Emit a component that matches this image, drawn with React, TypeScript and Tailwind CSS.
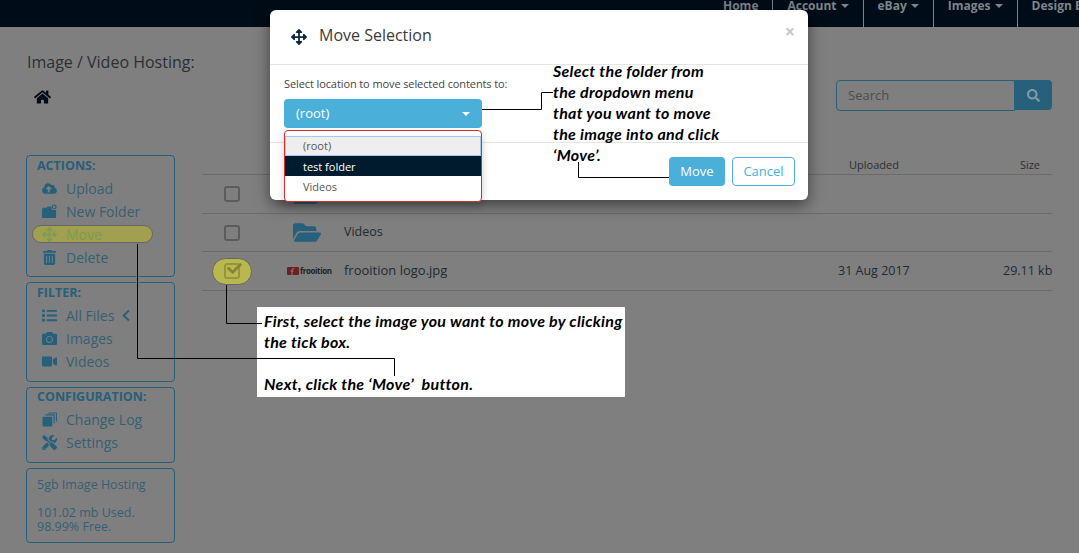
import {
  FaArrowsAlt,
  FaCamera,
  FaCheck,
  FaChevronLeft,
  FaCloudUploadAlt,
  FaFolderOpen,
  FaHome,
  FaList,
  FaSearch,
  FaTools,
  FaTrashAlt,
  FaVideo,
} from "react-icons/fa"

function NewFolderIcon({ className }: { className?: string }) {
  return (
    <svg viewBox="0 0 16 16" className={className} fill="currentColor">
      <path d="M0 5.5 L1 4 L5 4 L6 3 L10 2.5 L10 5 L11.5 6.5 L15 6.5 L15 15 L0 15 Z" />
      <circle cx="13" cy="3" r="2" fill="none" stroke="currentColor" strokeWidth="1.2" />
    </svg>
  )
}

function StackIcon({ className }: { className?: string }) {
  return (
    <svg viewBox="0 0 16 16" className={className} fill="currentColor">
      <path d="M6 0.5 H15 Q16 0.5 16 1.5 V10 H14.8 V1.7 H6 Z" />
      <path d="M3.5 2.5 H13.5 V12 H12.3 V3.7 H3.5 Z" />
      <rect x="0.5" y="5" width="10.5" height="10.5" rx="1" />
    </svg>
  )
}

const navItems = [
  { label: "Home" },
  { label: "Account", caret: true },
  { label: "eBay", caret: true },
  { label: "Images", caret: true },
  { label: "Design Extras" },
]

const sections = [
  {
    title: "ACTIONS:",
    box: "h-[122px] pt-[1px]",
    list: "mt-[3px]",
    items: [
      { icon: FaCloudUploadAlt, label: "Upload" },
      { icon: NewFolderIcon, label: "New Folder" },
      { icon: FaArrowsAlt, label: "Move", active: true },
      { icon: FaTrashAlt, label: "Delete" },
    ],
  },
  {
    title: "FILTER:",
    box: "h-[100px] pt-[1px]",
    list: "mt-[3px]",
    items: [
      { icon: FaList, label: "All Files", current: true },
      { icon: FaCamera, label: "Images" },
      { icon: FaVideo, label: "Videos" },
    ],
  },
  {
    title: "CONFIGURATION:",
    box: "h-[76px]",
    list: "mt-[3px]",
    items: [
      { icon: StackIcon, label: "Change Log" },
      { icon: FaTools, label: "Settings" },
    ],
  },
]

function Caret({ className }: { className: string }) {
  return <span className={`inline-block w-0 h-0 border-x-[4px] border-x-transparent border-t-[4px] ${className}`} />
}

function Checkbox() {
  return <div className="w-[16px] h-[16px] rounded-[3px] border-2 border-[#5c5c5c]" />
}

function Sidebar() {
  return (
    <aside className="w-[149px] shrink-0 flex flex-col gap-[5px] text-[#365f72]">
      {sections.map((section) => (
        <div key={section.title} className={`${section.box} border border-[#26607a] rounded-[4px] pl-[10px]`}>
          <div className="text-[12.5px] leading-[17px] font-bold text-[#26607a]">{section.title}</div>
          <div className={`${section.list} flex flex-col`}>
            {section.items.map((item) => (
              <div key={item.label} className="relative h-[23px] flex items-center text-[14px] pl-[5px]">
                {item.active && (
                  <div className="absolute left-[-5px] top-[2px] w-[121px] h-[18px] rounded-full bg-[#a0a04e] border border-[#666]" />
                )}
                <item.icon className={`relative w-[15px] h-[15px] shrink-0 ${item.active ? "text-[#7a9c58]" : "text-[#26607a]"}`} />
                <span className={`relative ml-[9px] ${item.active ? "text-[#7a9c58]" : ""}`}>{item.label}</span>
                {item.current && <FaChevronLeft className="ml-[7px] w-[10px] h-[13px] text-[#26607a]" />}
              </div>
            ))}
          </div>
        </div>
      ))}
      <div className="h-[75px] border border-[#26607a] rounded-[4px] pl-[10px] pt-[9px] text-[12.5px] leading-[14px]">
        <div className="mb-[14px]">5gb Image Hosting</div>
        <div>101.02 mb Used.</div>
        <div>98.99% Free.</div>
      </div>
    </aside>
  )
}

function FileTable() {
  return (
    <div className="w-[850px] whitespace-nowrap">
      <div className="h-[20px] border-b border-[#6b6b6b] flex items-center pt-[1px] text-[11px] text-[#2f2f2f]">
        <span className="ml-[647px]">Uploaded</span>
        <span className="ml-[121px]">Size</span>
      </div>
      <div className="h-[39px] border-b border-[#6b6b6b] flex items-center">
        <div className="ml-[22px]"><Checkbox /></div>
        <FaFolderOpen className="ml-[53px] w-[28px] h-[25px] text-[#26607a]" />
      </div>
      <div className="h-[38px] border-b border-[#6b6b6b] flex items-center">
        <div className="ml-[22px]"><Checkbox /></div>
        <FaFolderOpen className="ml-[53px] w-[28px] h-[25px] text-[#26607a]" />
        <span className="ml-[23px] text-[12.5px] text-[#1f2a30]">Videos</span>
      </div>
      <div className="h-[39px] border-b border-[#6b6b6b] flex items-center text-[12.5px] text-[#1f2a30]">
        <div className="ml-[10px] w-[40px] h-[27px] shrink-0 rounded-full bg-[#b8b84e] border border-[#666] flex items-center justify-center">
          <div className="relative w-[16px] h-[16px] rounded-[3px] border-2 border-[#95953e]">
            <FaCheck className="absolute left-[1px] top-[-4px] w-[15px] h-[15px] text-[#85853a]" />
          </div>
        </div>
        <div className="ml-[35px] w-[42px] shrink-0 flex items-center gap-[1px]">
          <svg viewBox="0 0 12 8" className="w-[12px] h-[8px] shrink-0">
            <rect width="12" height="8" rx="1" fill="#6e2020" />
            <path d="M5 8 V3 Q5 1.5 7 1.5 M3.5 4 H6.5" stroke="#7f7f7f" strokeWidth="1" fill="none" />
          </svg>
          <span className="text-[8px] font-bold tracking-[-0.4px] text-[#222]">frooition</span>
        </div>
        <span className="ml-[15px] w-[494px] shrink-0 text-[13px]">frooition logo.jpg</span>
        <span className="w-[165px] shrink-0">31 Aug 2017</span>
        <span>29.11 kb</span>
      </div>
    </div>
  )
}

function MoveModal() {
  return (
    <div className="absolute left-[270px] top-[10px] w-[538px] h-[190px] bg-white rounded-[6px] shadow-[0_5px_15px_rgba(0,0,0,0.5)] flex flex-col text-[#333]">
      <div className="h-[55px] shrink-0 border-b border-[#e5e5e5] flex items-center pl-[21px] relative">
        <FaArrowsAlt className="w-[16px] h-[16px] text-[#0b2a42]" />
        <span className="ml-[12px] mb-[4px] text-[16px] text-[#3a3a3a]">Move Selection</span>
        <span className="absolute right-[13px] top-[11px] text-[18px] leading-[20px] font-bold text-[#c8c8c8]">×</span>
      </div>
      <div className="h-[78px] shrink-0 border-b border-[#e5e5e5] pl-[14px] pt-[11px] relative">
        <div className="text-[11px] leading-[16px] tracking-[-0.1px] text-[#444]">Select location to move selected contents to:</div>
        <div className="mt-[7px] w-[198px] h-[29px] rounded-[4px] bg-[#4ab0d9] text-white text-[13px] flex items-center justify-between pl-[12px] pr-[12px]">
          <span>(root)</span>
          <Caret className="border-t-white" />
        </div>
        <div className="absolute z-10 left-[14px] top-[65px] w-[198px] h-[72px] bg-white border border-[#d0312d] rounded-[4px] shadow-[0_4px_8px_rgba(0,0,0,0.2)] pt-[5px] text-[11px]">
          <div className="h-[20px] bg-[#eeeeee] border border-[#a8c6ee] pl-[17px] flex items-center text-[#555]">(root)</div>
          <div className="h-[20px] bg-[#001a2e] text-white pl-[18px] pt-[2px] flex items-center">test folder</div>
          <div className="h-[20px] pl-[18px] pt-[2px] flex items-center text-[#555]">Videos</div>
        </div>
      </div>
      <div className="flex-1 flex items-start justify-end gap-[7px] pr-[13px] pt-[14px] text-[13px]">
        <div className="w-[56px] h-[29px] rounded-[4px] bg-[#4ab0d9] text-white flex items-center justify-center">Move</div>
        <div className="w-[63px] h-[29px] rounded-[4px] bg-white border border-[#4ab0d9] text-[#4ab0d9] flex items-center justify-center">Cancel</div>
      </div>
    </div>
  )
}

function Annotations() {
  const note = "font-['Lato',sans-serif] font-bold italic text-[16px] leading-[21px] tracking-[0.3px] text-black"
  return (
    <>
      <div className="absolute left-[257px] top-[307px] w-[368px] h-[90px] bg-white" />
      <svg className="absolute left-0 top-0 pointer-events-none" width="1079" height="553" fill="none" stroke="#000" strokeWidth="1">
        <polyline points="482,109.5 541.5,109.5 541.5,92.5 553,92.5" />
        <polyline points="578.5,162 578.5,177.5 669,177.5" />
        <polyline points="137.5,244 137.5,358.5 394.5,358.5 394.5,376" />
        <polyline points="226.5,285 226.5,323.5 262,323.5" />
      </svg>
      <div className={`absolute left-[553px] top-[60px] whitespace-pre ${note}`}>
        {"Select the folder from\nthe dropdown menu\nthat you want to move\nthe image into and click\n‘Move’."}
      </div>
      <div className={`absolute left-[264px] top-[310px] whitespace-pre ${note}`}>
        {"First, select the image you want to move by clicking\nthe tick box.\n\nNext, click the ‘Move’  button."}
      </div>
    </>
  )
}

export default function App() {
  return (
    <div className="relative w-[1079px] h-[553px] overflow-hidden bg-[#7f7f7f] font-['Open_Sans',sans-serif]">
      <nav className="h-[27px] bg-[#000c17] flex pl-[709px] text-[12px] font-bold text-[#7d858a] whitespace-nowrap">
        {navItems.map((item, index) => (
          <div key={item.label} className={`shrink-0 h-[27px] px-[14px] ${index > 0 ? "border-l border-[#7d858a]" : ""}`}>
            <span className="leading-[11px] flex items-center gap-[4px]">
              {item.label}
              {item.caret && <Caret className="border-t-[#7d858a]" />}
            </span>
          </div>
        ))}
      </nav>

      <div className="pl-[27px] pt-[25px] h-[20px] box-content text-[16px] leading-[20px] text-[#2a2f33]">Image / Video Hosting:</div>
      <div className="flex items-start justify-between pr-[27px] pl-[34px] mt-[-1px] h-[75px]">
        <FaHome className="mt-[18px] w-[17px] h-[16px] text-[#000c17]" />
        <div className="flex mt-[9px]">
          <div className="w-[179px] h-[31px] border border-[#26607a] rounded-l-[4px] pl-[11px] flex items-center text-[13px] text-[#4d4d4d]">Search</div>
          <div className="w-[37px] h-[30px] bg-[#26607a] rounded-r-[4px] flex items-center justify-center">
            <FaSearch className="w-[13px] h-[13px] text-[#7f9aa6]" />
          </div>
        </div>
      </div>

      <div className="flex pl-[26px] gap-[27px] mt-[9px]">
        <Sidebar />
        <FileTable />
      </div>

      <MoveModal />
      <Annotations />
    </div>
  )
}
